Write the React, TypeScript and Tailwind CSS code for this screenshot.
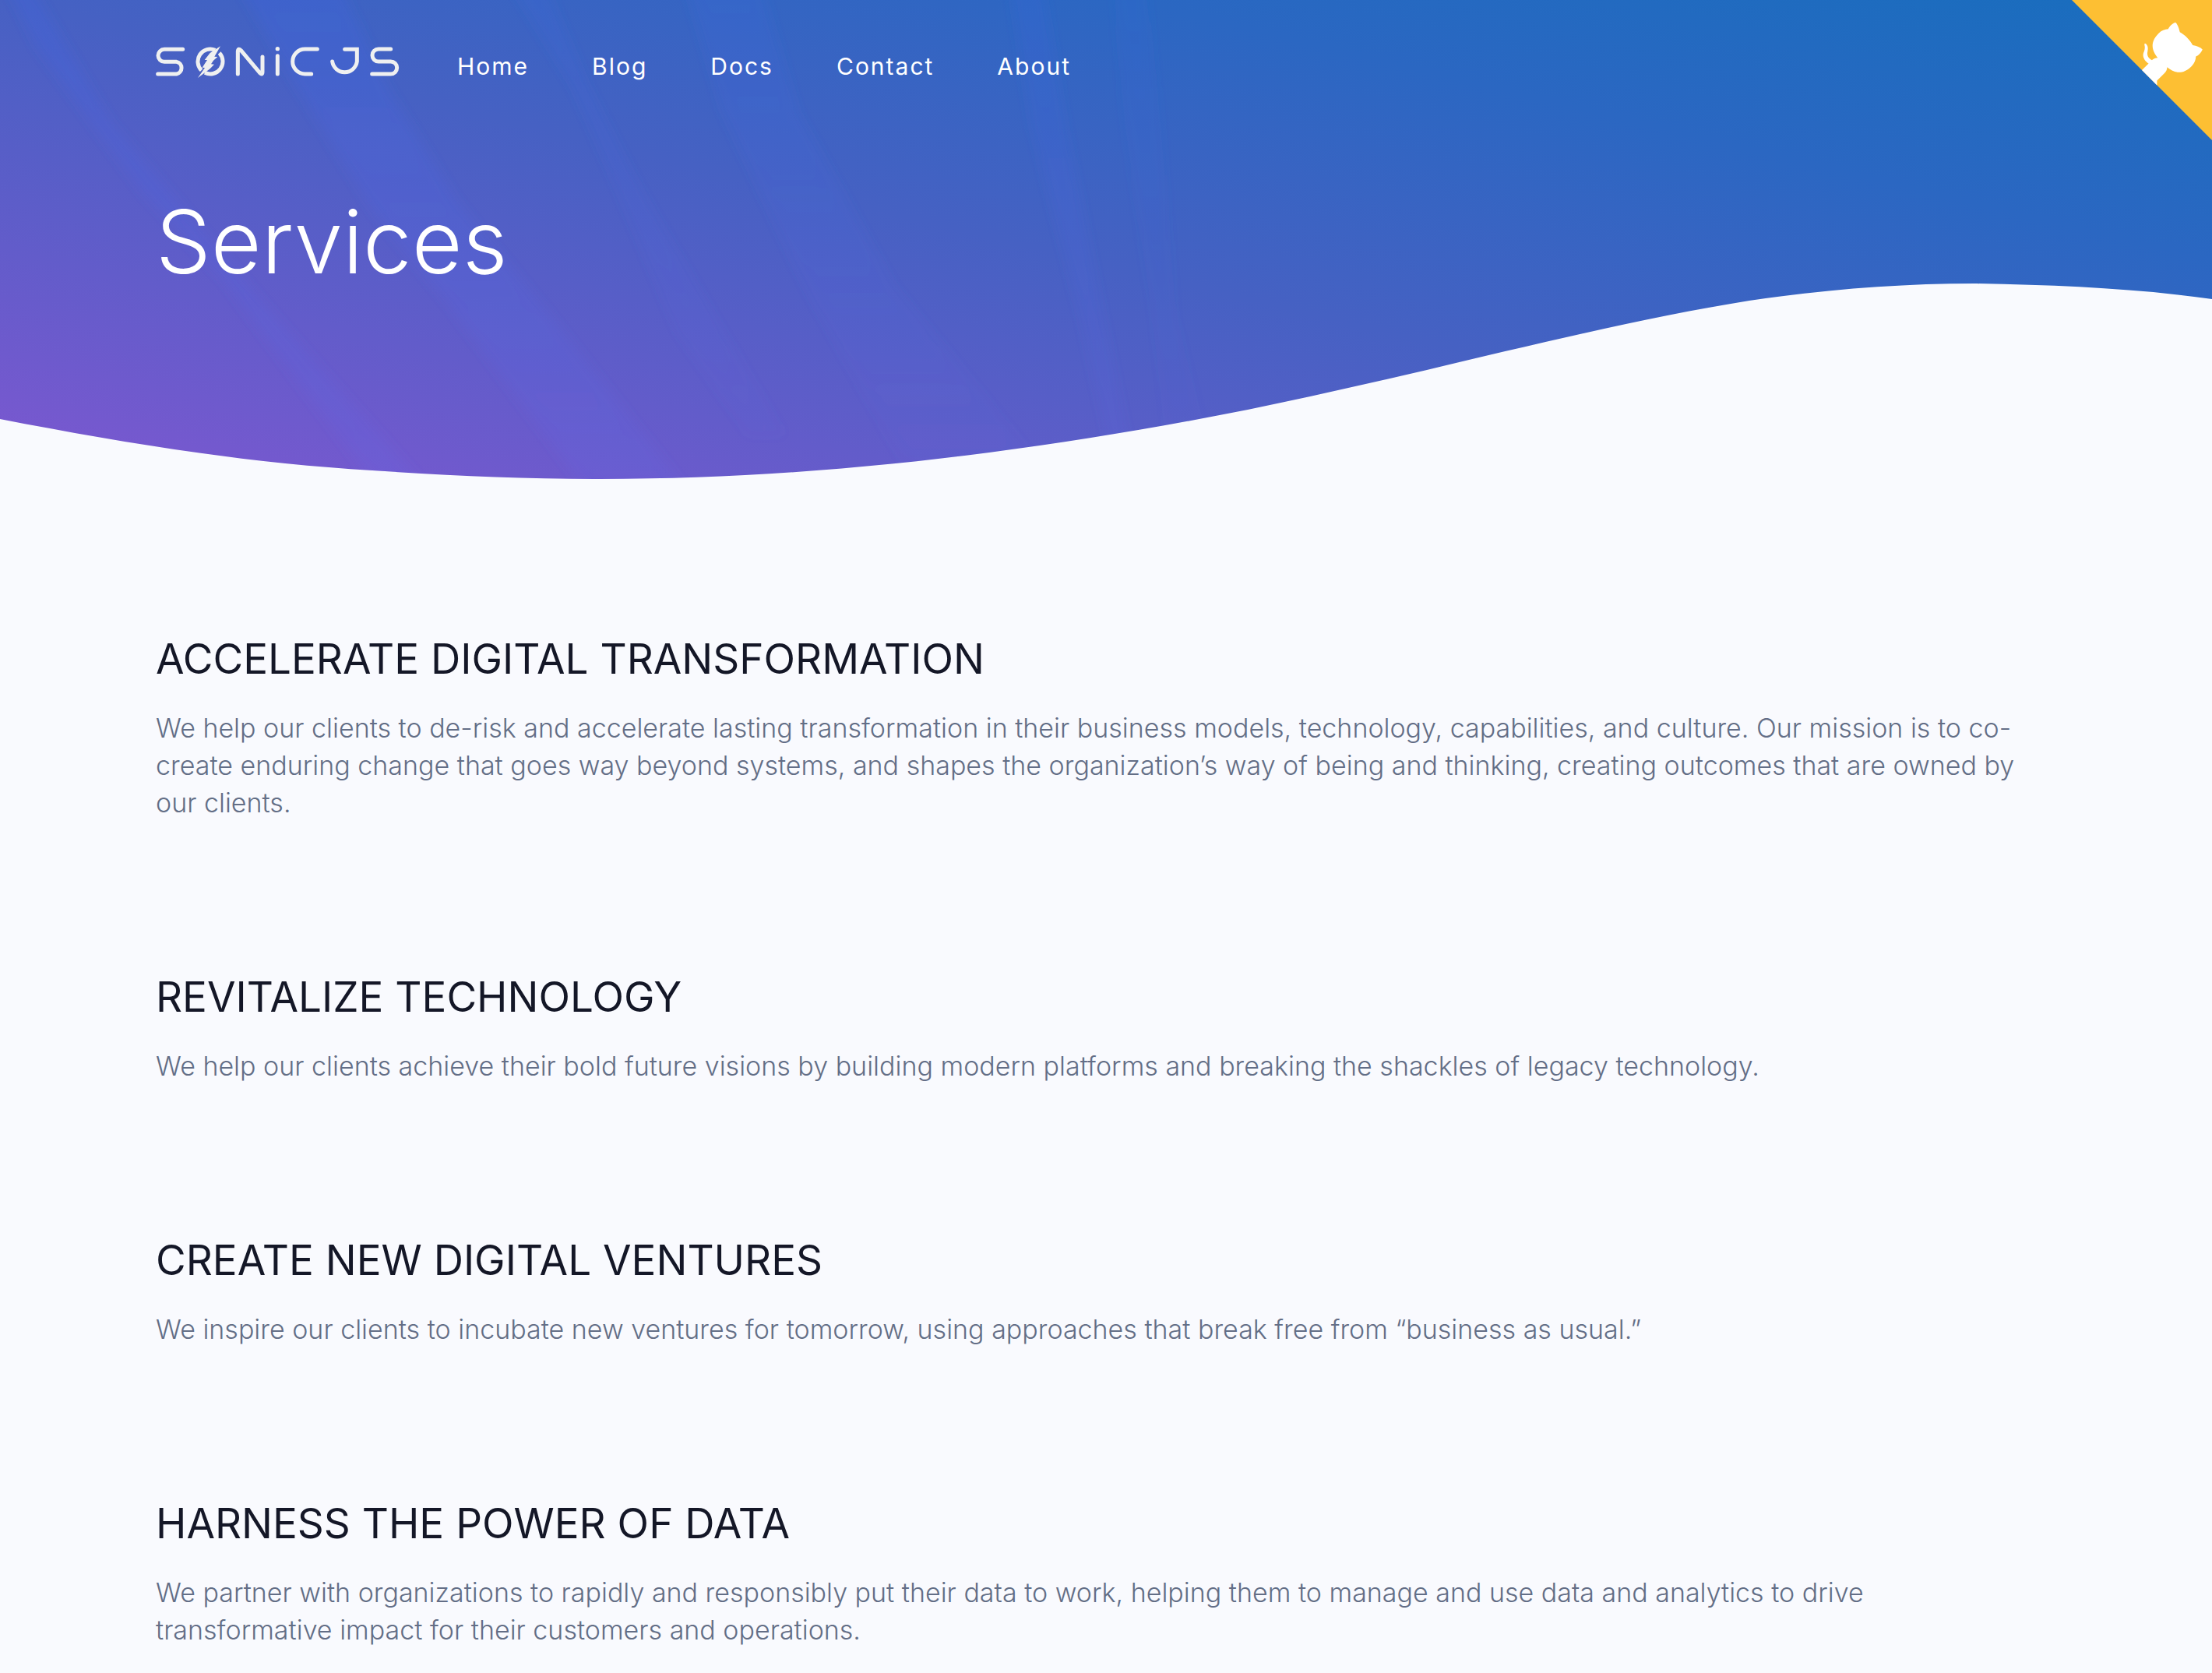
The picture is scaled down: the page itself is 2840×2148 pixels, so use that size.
const links = ["Home", "Blog", "Docs", "Contact", "About"];

const services = [
  {
    title: "ACCELERATE DIGITAL TRANSFORMATION",
    lines: [
      "We help our clients to de-risk and accelerate lasting transformation in their business models, technology, capabilities, and culture. Our mission is to co-",
      "create enduring change that goes way beyond systems, and shapes the organization’s way of being and thinking, creating outcomes that are owned by",
      "our clients.",
    ],
  },
  {
    title: "REVITALIZE TECHNOLOGY",
    lines: [
      "We help our clients achieve their bold future visions by building modern platforms and breaking the shackles of legacy technology.",
    ],
  },
  {
    title: "CREATE NEW DIGITAL VENTURES",
    lines: [
      "We inspire our clients to incubate new ventures for tomorrow, using approaches that break free from “business as usual.”",
    ],
  },
  {
    title: "HARNESS THE POWER OF DATA",
    lines: [
      "We partner with organizations to rapidly and responsibly put their data to work, helping them to manage and use data and analytics to drive",
      "transformative impact for their customers and operations.",
    ],
  },
];

function Logo() {
  return (
    <svg viewBox="57 55 939 126" className="h-[42px] w-[313px]" role="img" aria-label="SonicJS">
      <g fill="none" stroke="#eff0f0" strokeWidth="15" strokeLinecap="round" strokeLinejoin="round">
        <path d="M161 68H90A24 24 0 0 0 90 116H137A24 24 0 0 1 137 163H65" />
        <path d="M286 71A48 48 0 0 0 233 149M246 158A48 48 0 0 0 302 82" strokeLinecap="butt" />
        <path d="M373 163V75Q375 62 385 72L458 159Q468 168 468 155V97" />
        <path d="M526 93V163" />
        <path d="M679 67H632A48 48 0 0 0 632 163H656" />
        <path d="M785 68H832V115A48 48 0 0 1 737 115" strokeLinejoin="miter" />
        <path d="M962 67H915A24 24 0 0 0 915 115H962A24 24 0 0 1 962 163H890" />
      </g>
      <circle cx="526" cy="66" r="8" fill="#eff0f0" />
      <path
        fill="#eff0f0"
        d="M306 56L266 82L245 109L255 109L236 138L246 139L219 178L266 143L282 126L270 125L279 111L295 97L283 96Z"
      />
    </svg>
  );
}

function HeroBackdrop() {
  return (
    <svg
      viewBox="0 0 2840 640"
      preserveAspectRatio="none"
      className="absolute inset-0 -z-10 h-full w-full"
      aria-hidden="true"
    >
      <defs>
        <linearGradient id="sky" gradientUnits="userSpaceOnUse" x1="0" y1="640" x2="304" y2="-624">
          <stop offset="0" stopColor="#7f57d1" />
          <stop offset="0.48" stopColor="#4661c3" />
          <stop offset="0.74" stopColor="#2b67c2" />
          <stop offset="0.96" stopColor="#1a6dbe" />
        </linearGradient>
        <linearGradient id="ray" gradientUnits="userSpaceOnUse" x1="0" y1="0" x2="0" y2="620">
          <stop offset="0" stopColor="#3c64e6" stopOpacity="0.26" />
          <stop offset="1" stopColor="#606cee" stopOpacity="0.14" />
        </linearGradient>
        <linearGradient id="fading-ray" gradientUnits="userSpaceOnUse" x1="0" y1="0" x2="0" y2="600">
          <stop offset="0" stopColor="#3c68e4" stopOpacity="0.18" />
          <stop offset="1" stopColor="#606cee" stopOpacity="0.04" />
        </linearGradient>
        <filter id="soft" x="-5%" y="-5%" width="110%" height="110%">
          <feGaussianBlur stdDeviation="8" />
        </filter>
        <clipPath id="wave">
          <path d="M0 0V538C160 569 320 595 478 604C580 611 670 615 770 615C1060 615 1340 578 1602 526C1680 510 1755 493 1832 475C1970 442 2120 406 2246 386C2340 372 2440 364 2534 364C2640 366 2740 370 2840 384V0Z" />
        </clipPath>
      </defs>
      <g clipPath="url(#wave)">
        <rect width="2840" height="640" fill="url(#sky)" />
        <g filter="url(#soft)" fill="url(#ray)">
          <path d="M8 -20L48 61L182 245L287 359L383 490L495 640H560L354 408L230 261L143 159L38 -20Z" />
          <path d="M306 -20L383 114L478 269L574 388L760 640H890L708 408L588 261L498 114L436 -20Z" />
          <path
            d="M655 -20L737 114L794 245L870 428L960 560H1010L930 428L823 245L756 114L700 -20Z"
            fill="url(#fading-ray)"
          />
          <path
            d="M880 -20L928 143L1033 367L1160 600H1340L1148 367L1024 143L976 -20Z"
            fill="url(#fading-ray)"
          />
          <path
            d="M1297 -20L1325 163L1388 408L1430 600H1455L1416 408L1368 163L1338 -20Z"
            fillOpacity="0.7"
          />
          <path
            d="M1430 -20L1445 163L1480 408L1500 600H1560L1510 408L1490 163L1470 -20Z"
            fill="url(#fading-ray)"
            fillOpacity="0.6"
          />
        </g>
      </g>
    </svg>
  );
}

function GithubCorner() {
  return (
    <a href="#github" aria-label="View source on GitHub" className="absolute top-0 right-0">
      <svg viewBox="0 3 232 232" className="size-[180px]" aria-hidden="true">
        <path d="M0 3L232 235V3Z" fill="#fdbf33" />
        <g fill="#fff">
          <path d="M128.3 109C113.8 99.7 119 89.6 119 89.6C122 82.7 120.5 78.6 120.5 78.6C119.2 72 123.4 76.3 123.4 76.3C127.3 80.9 125.5 87.3 125.5 87.3C122.9 97.6 130.6 101.9 134.4 103.2Z" />
          <path d="M116 119L133.7 101.6C136.9 99.2 139.9 98.4 142.2 98.6C133.8 88 127.5 74.4 143.8 58C148.5 53.4 154 51.2 159.7 51C160.3 49.4 163.2 43.6 171.4 40.1C171.4 40.1 176.1 42.5 178.8 56.2C183.1 58.6 187.2 61.8 190.9 65.4C194.5 69 197.7 73.2 200.1 77.6C213.8 80.2 216.3 84.9 216.3 84.9C212.7 93.1 206.9 96 205.4 96.6C205.1 102.4 203 107.8 198.3 112.5C181.9 128.9 168.3 122.5 157.7 114.1C157.9 116.9 156.7 120.9 152.7 124.9L141 136.5V144Z" />
        </g>
      </svg>
    </a>
  );
}

export default function App() {
  return (
    <div className="min-h-screen bg-[#f9fafe] font-['Inter',sans-serif] font-light">
      <header className="relative isolate h-[640px] text-white">
        <HeroBackdrop />
        <GithubCorner />
        <div className="mx-auto w-full max-w-[2488px] px-6">
          <nav className="flex items-start pt-[59px]" aria-label="Main">
            <a href="#home">
              <Logo />
            </a>
            <ul className="mt-1 ml-[74px] flex gap-[81px] text-[30px] leading-[44px] font-normal tracking-[2px]">
              {links.map((link) => (
                <li key={link}>
                  <a href={`#${link.toLowerCase()}`}>{link}</a>
                </li>
              ))}
            </ul>
          </nav>
          <h1 className="mt-[136px] text-[112px] leading-[134px]">Services</h1>
        </div>
      </header>
      <main className="mx-auto w-full max-w-[2488px] px-6 pt-[172px]">
        {services.map((service) => (
          <section key={service.title} className="pb-[191px] last:pb-0">
            <h2 className="text-[53px] leading-[68px] font-normal text-[#141727]">{service.title}</h2>
            <p className="mt-[31px] text-[34px] leading-[48px] text-[#636e86]">
              {service.lines.map((line) => (
                <span key={line} className="block whitespace-nowrap">
                  {line}
                </span>
              ))}
            </p>
          </section>
        ))}
      </main>
    </div>
  );
}
